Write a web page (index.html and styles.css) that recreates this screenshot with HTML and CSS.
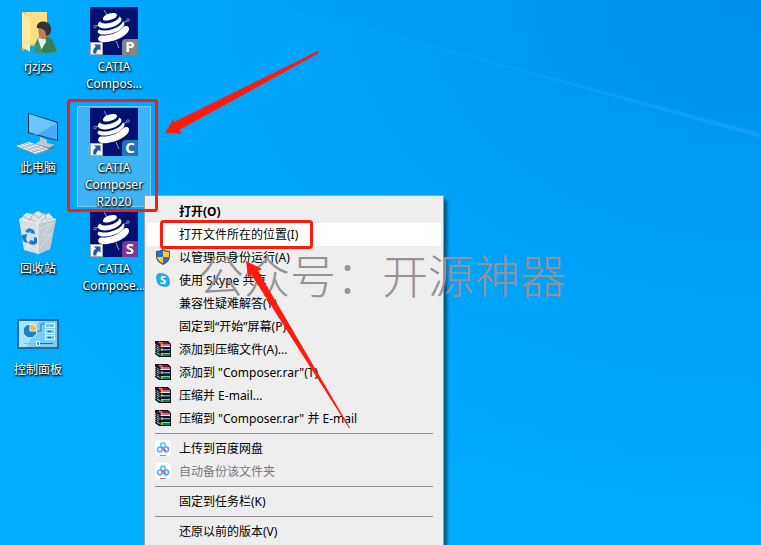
FILE: index.html
```html
<!DOCTYPE html>
<html lang="zh-CN">
<head>
  <meta charset="UTF-8" />
  <title>桌面</title>
  <link rel="stylesheet" href="styles.css">
</head>
<body>
  <!-- shared icons -->
  <svg class="defs" width="0" height="0" aria-hidden="true">
    <symbol id="composer" viewBox="0 0 48 48">
      <rect width="48" height="48" rx="1" fill="#02106f"/>
      <path d="M14 3l3 5M26 34l3 7M6 19l5-2M37 14l-5 2" stroke="#8f9ccb" stroke-width="1"/>
      <circle cx="5" cy="19.500" r="1.300" fill="none" stroke="#8f9ccb" stroke-width=".8"/>
      <circle cx="38" cy="13" r="1.300" fill="none" stroke="#8f9ccb" stroke-width=".8"/>
      <g fill="#fff">
        <path d="M13 12.500C12 9 19 5.500 24 6C28 6.500 28 9.500 24 11.500C20 13.500 14 14.500 13 12.500Z"/>
        <path d="M10 14.500C12 17.500 20 17 25 14C28 12.500 29 11 29 9.500C33 11 32 15 27 18C21 21.500 12 22.500 9 20C7 18 8 16 10 14.500Z"/>
        <path d="M9 22.500C14 25 24 22.500 29 19C31 17.500 32.500 16 33 14.500C36 16 34 20 30 23C25 26.500 15 28.500 10 27C7 26 7 24 9 22.500Z"/>
        <path d="M11 28.500C19 29 28 26 33 20.500C37 17 41 20 38 25C33 32 17 37 10 34.500C7 33 8 29 11 28.500Z"/>
      </g>
    </symbol>
    <symbol id="shortcut" viewBox="0 0 13 13">
      <rect x=".5" y=".5" width="12" height="12" fill="#f5f5f5" stroke="#a9a9a9"/>
      <path d="M4 2.500h6.500v6L8.500 7C6.500 8.500 6 10 6.500 11.500H3.500C2.500 9 3.500 6.500 6 4.500z" fill="#21599f"/>
    </symbol>
    <symbol id="books" viewBox="0 0 16 16">
      <path d="M0 0h13l3 3v13H4l-4-3z" fill="#111"/>
      <path d="M1 1h11l3 3H5z" fill="#8b123f"/><path d="M5 3h10v2H6z" fill="#d957a3"/>
      <path d="M5 5h10v1H6z" fill="#fff"/><path d="M2 6l4 2h9v2H6L2 8z" fill="#155b9b"/>
      <path d="M6 8h9v1H6z" fill="#51b5ea"/><path d="M2 11l4 2h9v2H6l-4-2z" fill="#078064"/>
      <path d="M6 12h9v1H6z" fill="#5ce0a5"/>
      <path d="M0 3l5 3M0 7l5 3M0 11l5 3M0 5l4 2M0 9l4 2" stroke="#fff" stroke-dasharray="1 1"/>
      <path d="M4 1l3 1v3l1 1M7 7v3M7 12v3" stroke="#dfd436" fill="none"/>
    </symbol>
    <symbol id="cloud" viewBox="0 0 16 16">
      <rect width="16" height="16" rx="3" fill="#fff"/>
      <g fill="none" stroke-width="1.700">
        <circle cx="8" cy="5.500" r="2.300" stroke="#5cc6f5"/>
        <circle cx="4.800" cy="9.500" r="2.300" stroke="#4fbdf0"/>
        <circle cx="11.200" cy="9.500" r="2.300" stroke="#62a5f0"/>
        <path d="M6 7l2 1 3 3" stroke="#f1587d"/>
      </g>
      <path d="M5 15.500h3" stroke="#ef648c"/><path d="M8 15.500h3" stroke="#3fb7ee"/>
    </symbol>
  </svg>

  <main class="desktop">
    <svg class="wallpaper" viewBox="0 0 761 545" preserveAspectRatio="none" aria-hidden="true">
      <defs>
        <linearGradient id="beam" x1="0" x2="1">
          <stop offset="0" stop-color="#25aaff" stop-opacity=".1"/>
          <stop offset="1" stop-color="#25aaff" stop-opacity=".5"/>
        </linearGradient>
      </defs>
      <path d="M265 0L761 133v5z" fill="url(#beam)"/>
      <path d="M265 0H761V135z" fill="#0070dc" opacity=".05"/>
    </svg>

    <div class="icons">
      <button class="shortcut">
        <svg viewBox="0 0 48 48">
          <path d="M8 5h25v34H17l-9 5z" fill="#e8bf55"/>
          <path d="M11 5h22v32H16z" fill="#ffdf83"/>
          <path d="M8 5l8 7v33l-8-5z" fill="#ffe9a4"/>
          <path d="M20 45c0-9 3-15 9-16 8 1 14 7 14 16-6 2-17 2-23 0z" fill="#3f946c"/>
          <path d="M24 32l7-3 2 6-5 9z" fill="#e9eef0"/>
          <path d="M31 29l7 3 4 12-12 2-3-3 5-8z" fill="#367d5c"/>
          <path d="M24 19l10-2v11c-2 5-7 6-9 1z" fill="#b77f58"/>
          <path d="M23 21c-1-6 6-8 11-5 4 2 4 9 1 12l-3 1c0-5-2-8-9-8z" fill="#343235"/>
        </svg>
        <span>rjzjzs</span>
      </button>
      <button class="shortcut">
        <svg viewBox="0 0 48 48">
          <use href="#composer"/>
          <use href="#shortcut" y="35" width="13" height="13"/>
          <path d="M32 36a4 4 0 0 1 4-4h12v16H32z" fill="#858585"/>
          <text class="tag" x="40" y="45">P</text>
        </svg>
        <span>CATIA<br>Compos...</span>
      </button>
      <button class="shortcut">
        <svg viewBox="0 0 48 48">
          <path d="M14 5l30 9v19L14 25z" fill="#26343e"/>
          <path d="M15 6l28 9v17L15 24z" fill="#41aefa"/>
          <path d="M15 6l28 9-20 12-8-3z" fill="#6cc4ff"/>
          <path d="M26 29l7 3v3l8 2-6 3-14-4 5-3z" fill="#bbc8cf"/>
          <path d="M21 36l14 4 6-3v2l-6 3-14-4z" fill="#66747c"/>
          <path d="M2 38l13-4 20 7-13 5z" fill="#eef2f5"/>
          <path d="M2 38l20 8 13-5v1l-13 5L2 39z" fill="#84929c"/>
          <path d="M5 37l20 8M9 36l20 8M12 35l20 7M8 40l13-4M13 42l13-4M18 44l13-4" stroke="#a0acb5" stroke-width=".8"/>
        </svg>
        <span>此电脑</span>
      </button>
      <button class="shortcut selected">
        <svg viewBox="0 0 48 48">
          <use href="#composer"/>
          <use href="#shortcut" y="35" width="13" height="13"/>
          <path d="M32 36a4 4 0 0 1 4-4h12v16H32z" fill="#2074b9"/>
          <text class="tag" x="40" y="45">C</text>
        </svg>
        <span>CATIA<br>Composer<br>R2020</span>
      </button>
      <button class="shortcut">
        <svg viewBox="0 0 48 48">
          <path d="M5 11l7-7 7 1 5-3 7 4 4-2 6 7-5 7H9z" fill="#dfe4e7"/>
          <path d="M9 7l7 4 3-6 6 4 5-5 3 8 5-3M13 15l3-5 9 5 5-6" fill="none" stroke="#acb5bb"/>
          <path d="M5 10l18 4 19-4-6 30-12 5-14-4z" fill="#d8dfe4"/>
          <path d="M24 14l18-4-6 30-12 5z" fill="#c0cad0"/>
          <path d="M5 10l19 4 18-4M24 14v31" fill="none" stroke="#eef2f4"/>
          <path d="M26 20l12-6-9 13 8-2-11 14M9 16l8 5-4 15 9 5" fill="none" stroke="#eef2f4" opacity=".5"/>
          <g fill="#147ed3">
            <path d="M11 22l4-3 5 2 1 4-5-1 1-2-3 2z"/>
            <path d="M8 26l5-1-1 6 3 3-5-1-2-4z"/>
            <path d="M16 31l4 1v-4l3 1v5l-3 2-5-1z"/>
          </g>
        </svg>
        <span>回收站</span>
      </button>
      <button class="shortcut">
        <svg viewBox="0 0 48 48">
          <use href="#composer"/>
          <use href="#shortcut" y="35" width="13" height="13"/>
          <path d="M32 36a4 4 0 0 1 4-4h12v16H32z" fill="#7c378f"/>
          <text class="tag" x="40" y="45">S</text>
        </svg>
        <span>CATIA<br>Compose...</span>
      </button>
      <button class="shortcut">
        <svg viewBox="0 0 48 48">
          <rect x="4" y="10" width="40" height="28" fill="#77cef6" stroke="#236e9d" stroke-width="2"/>
          <path d="M5 11h20L13 37H5z" fill="#a9e2fc"/>
          <circle cx="16" cy="21" r="7" fill="#1686cc" stroke="#e4f6ff"/>
          <path d="M16 21v-7a7 7 0 0 1 7 7z" fill="#fdb733" stroke="#e4f6ff"/>
          <path d="M23 21h4v-7h5" fill="none" stroke="#2881b2"/>
          <g fill="#7ac3e6" stroke="#e4f6ff"><rect x="31.500" y="13.500" width="9" height="4"/><rect x="31.500" y="19.500" width="9" height="4"/><rect x="31.500" y="25.500" width="9" height="4"/></g>
          <path d="M36 15.500h3" stroke="#fd9a13"/><path d="M34 21.500h3M34 27.500h3" stroke="#145f91"/>
          <path d="M10 33.500h13" stroke="#f4a61d"/><path d="M25 33.500h14" stroke="#1d70a3"/>
          <rect x="22.500" y="31.500" width="3" height="4" fill="#2b9bd7" stroke="#fff"/>
        </svg>
        <span>控制面板</span>
      </button>
    </div>

    <div class="menu" role="menu">
      <button class="item default" role="menuitem">打开(O)</button>
      <button class="item hover" role="menuitem">打开文件所在的位置(I)</button>
      <button class="item" role="menuitem">
        <svg viewBox="0 0 16 16">
          <path d="M8 0q3 2 7 2v5q0 6-7 9-7-3-7-9V2q4 0 7-2z" fill="#4c5256"/>
          <path d="M8 1.500V8H2V3q3 0 6-1.500zM8 8h6q-1 4-6 6.500z" fill="#1c75cf"/>
          <path d="M8 1.500Q11 3 14 3v5H8zM2 8h6v6.500Q3 12 2 8z" fill="#fdca36"/>
        </svg>
        以管理员身份运行(A)
      </button>
      <button class="item" role="menuitem">
        <svg viewBox="0 0 16 16">
          <circle cx="8" cy="8" r="6.500" fill="#28a8ea"/><circle cx="5.500" cy="5.500" r="4.500" fill="#28a8ea"/><circle cx="10.500" cy="10.500" r="4.500" fill="#28a8ea"/>
          <text class="skype" x="8" y="12">S</text>
        </svg>
        使用 Skype 共享
      </button>
      <button class="item" role="menuitem">兼容性疑难解答(Y)</button>
      <button class="item" role="menuitem">固定到“开始”屏幕(P)</button>
      <button class="item" role="menuitem"><svg><use href="#books"/></svg>添加到压缩文件(A)...</button>
      <button class="item" role="menuitem"><svg><use href="#books"/></svg>添加到 "Composer.rar"(T)</button>
      <button class="item" role="menuitem"><svg><use href="#books"/></svg>压缩并 E-mail...</button>
      <button class="item" role="menuitem"><svg><use href="#books"/></svg>压缩到 "Composer.rar" 并 E-mail</button>
      <hr>
      <button class="item" role="menuitem"><svg><use href="#cloud"/></svg>上传到百度网盘</button>
      <button class="item" role="menuitem" disabled><svg><use href="#cloud"/></svg>自动备份该文件夹</button>
      <hr>
      <button class="item" role="menuitem">固定到任务栏(K)</button>
      <hr>
      <button class="item" role="menuitem">还原以前的版本(V)</button>
      <hr>
    </div>

    <div class="watermark">公众号：开源神器</div>

    <!-- red marks over the desktop -->
    <svg class="marks" viewBox="0 0 761 545" aria-hidden="true">
      <g fill="none" stroke="#ff1a0c" stroke-width="3">
        <rect x="68.500" y="100.500" width="88" height="110" rx="2"/>
        <rect x="161.500" y="221.500" width="150" height="26" rx="2"/>
      </g>
      <g fill="#ff1a0c">
        <path d="M165 133L174 118V122L318 51L319 53L179 130L182 133.500Z"/>
        <path d="M246 261L262 269L258 271L350 428H349L251 274L248 278Z"/>
      </g>
    </svg>
  </main>
</body>
</html>
```
FILE: styles.css
```css
body {
  margin: 0;
  font-family: "Noto Sans", "Noto Sans CJK SC", sans-serif;
  font-size: 12px;
}
button {
  font: inherit;
  border: 0;
  background: none;
}
.defs {
  position: absolute;
}
.desktop {
  position: relative;
  height: 100vh;
  overflow: hidden;
  background: radial-gradient(ellipse at 100% 0, #0090ee 0%, #009cf6 25%, #00a6fc 50%, #00aeff 85%);
}
.wallpaper {
  position: absolute;
  width: 100%;
  height: 100%;
}

/* desktop icons */
.icons {
  position: relative;
  display: grid;
  grid-template-columns: 76px 76px;
  grid-auto-rows: 101px;
  padding-top: 5px;
}
.shortcut {
  display: flex;
  flex-direction: column;
  align-items: center;
  gap: 3px;
  margin: 0 1px;
  padding: 1px 0 0;
  border: 1px solid transparent;
  color: #fff;
  line-height: 17px;
  text-shadow: 0 1px 2px #000, 1px 1px 2px #000;
}
.shortcut svg {
  flex: none;
  width: 48px;
  height: 48px;
}
.shortcut.selected {
  border-color: #7cc9f8;
  background-color: #3db5f5;
}
.tag {
  font: bold 15px "Noto Sans", sans-serif;
  text-anchor: middle;
  fill: #fff;
  text-shadow: none;
}

/* context menu */
.menu {
  position: absolute;
  top: 195px;
  left: 144px;
  box-sizing: border-box;
  width: 300px;
  padding: 4px 2px;
  border: 1px solid #a0a0a0;
  background-color: #eee;
  box-shadow: 4px 4px 3px -1px rgba(0, 0, 0, 0.5);
}
.item {
  display: flex;
  align-items: center;
  gap: 8px;
  width: 100%;
  height: 23px;
  padding: 0 8px 2px 32px;
  color: #000;
  text-align: left;
  white-space: nowrap;
}
.item:has(svg) {
  padding-left: 8px;
}
.item svg {
  flex: none;
  width: 16px;
  height: 16px;
}
.item.default {
  font-weight: bold;
}
.item.hover {
  background-color: #fff;
}
.item:disabled {
  color: #7a7a7a;
}
.menu hr {
  height: 1px;
  margin: 3px 8px;
  border: 0;
  background-color: #919191;
}
.skype {
  font: bold 11px "Noto Sans", sans-serif;
  text-anchor: middle;
  fill: #fff;
}

.watermark {
  position: absolute;
  top: 240px;
  left: 198px;
  color: #979193;
  font-family: "Noto Sans CJK SC", sans-serif;
  font-size: 46px;
  font-weight: 300;
  line-height: 66px;
  white-space: nowrap;
  pointer-events: none;
}
.marks {
  position: absolute;
  top: 0;
  left: 0;
  width: 761px;
  height: 545px;
  pointer-events: none;
}
```
